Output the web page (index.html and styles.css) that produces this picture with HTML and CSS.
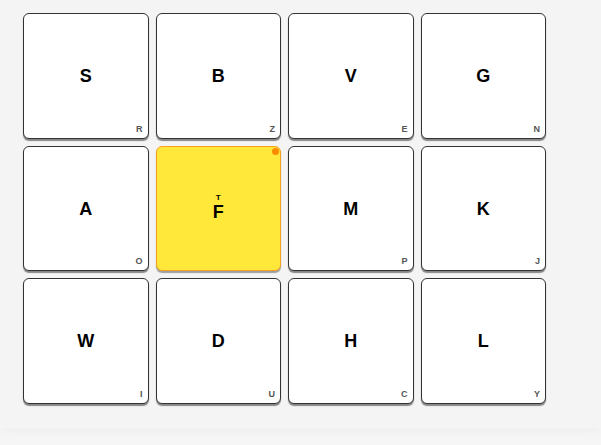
FILE: index.html
```html
<!DOCTYPE html>
<html>
<head>
<meta charset="utf-8">
<link rel="stylesheet" href="styles.css">
</head>
<body>
<div class="board">
  <div class="grid">
    <div class="tile"><span class="main">S</span><span class="sub">R</span></div>
    <div class="tile"><span class="main">B</span><span class="sub">Z</span></div>
    <div class="tile"><span class="main">V</span><span class="sub">E</span></div>
    <div class="tile"><span class="main">G</span><span class="sub">N</span></div>
    <div class="tile"><span class="main">A</span><span class="sub">O</span></div>
    <div class="tile active"><span class="stack"><span class="sup">T</span><span class="main">F</span></span><span class="dot"></span></div>
    <div class="tile"><span class="main">M</span><span class="sub">P</span></div>
    <div class="tile"><span class="main">K</span><span class="sub">J</span></div>
    <div class="tile"><span class="main">W</span><span class="sub">I</span></div>
    <div class="tile"><span class="main">D</span><span class="sub">U</span></div>
    <div class="tile"><span class="main">H</span><span class="sub">C</span></div>
    <div class="tile"><span class="main">L</span><span class="sub">Y</span></div>
  </div>
</div>
</body>
</html>
```
FILE: styles.css
```css
html, body {
  margin: 0;
  padding: 0;
  height: 100%;
}
body {
  background: #f6f6f6;
  font-family: "Liberation Sans", Arial, sans-serif;
  overflow: hidden;
}
.board {
  height: 428px;
  background: #f4f4f4;
  box-shadow: 0 3px 12px rgba(0,0,0,0.04);
  padding: 13px 0 0 23px;
  box-sizing: border-box;
}
.grid {
  display: grid;
  grid-template-columns: repeat(4, 125.5px);
  grid-auto-rows: 125.5px;
  gap: 7px;
}
.tile {
  position: relative;
  background: #fff;
  border: 1px solid #333;
  border-radius: 6px;
  box-sizing: border-box;
  box-shadow: 0 2px 1px rgba(0,0,0,0.45);
  display: flex;
  align-items: center;
  justify-content: center;
}
.main {
  font-weight: bold;
  font-size: 18px;
  color: #000;
  line-height: 1;
  margin-top: 1px;
}
.sub {
  position: absolute;
  right: 5px;
  bottom: 4px;
  font-size: 9px;
  font-weight: bold;
  color: #555;
}
.tile.active {
  background: #ffe83a;
  border-color: #f7a020;
  box-shadow: 0 2px 1px rgba(0,0,0,0.35);
}
.stack {
  display: flex;
  flex-direction: column;
  align-items: center;
  margin-top: -1px;
}
.sup {
  font-size: 8px;
  font-weight: bold;
  line-height: 1;
}
.dot {
  position: absolute;
  top: 1px;
  right: 1px;
  width: 7px;
  height: 7px;
  border-radius: 50%;
  background: #ff8a00;
}
```
